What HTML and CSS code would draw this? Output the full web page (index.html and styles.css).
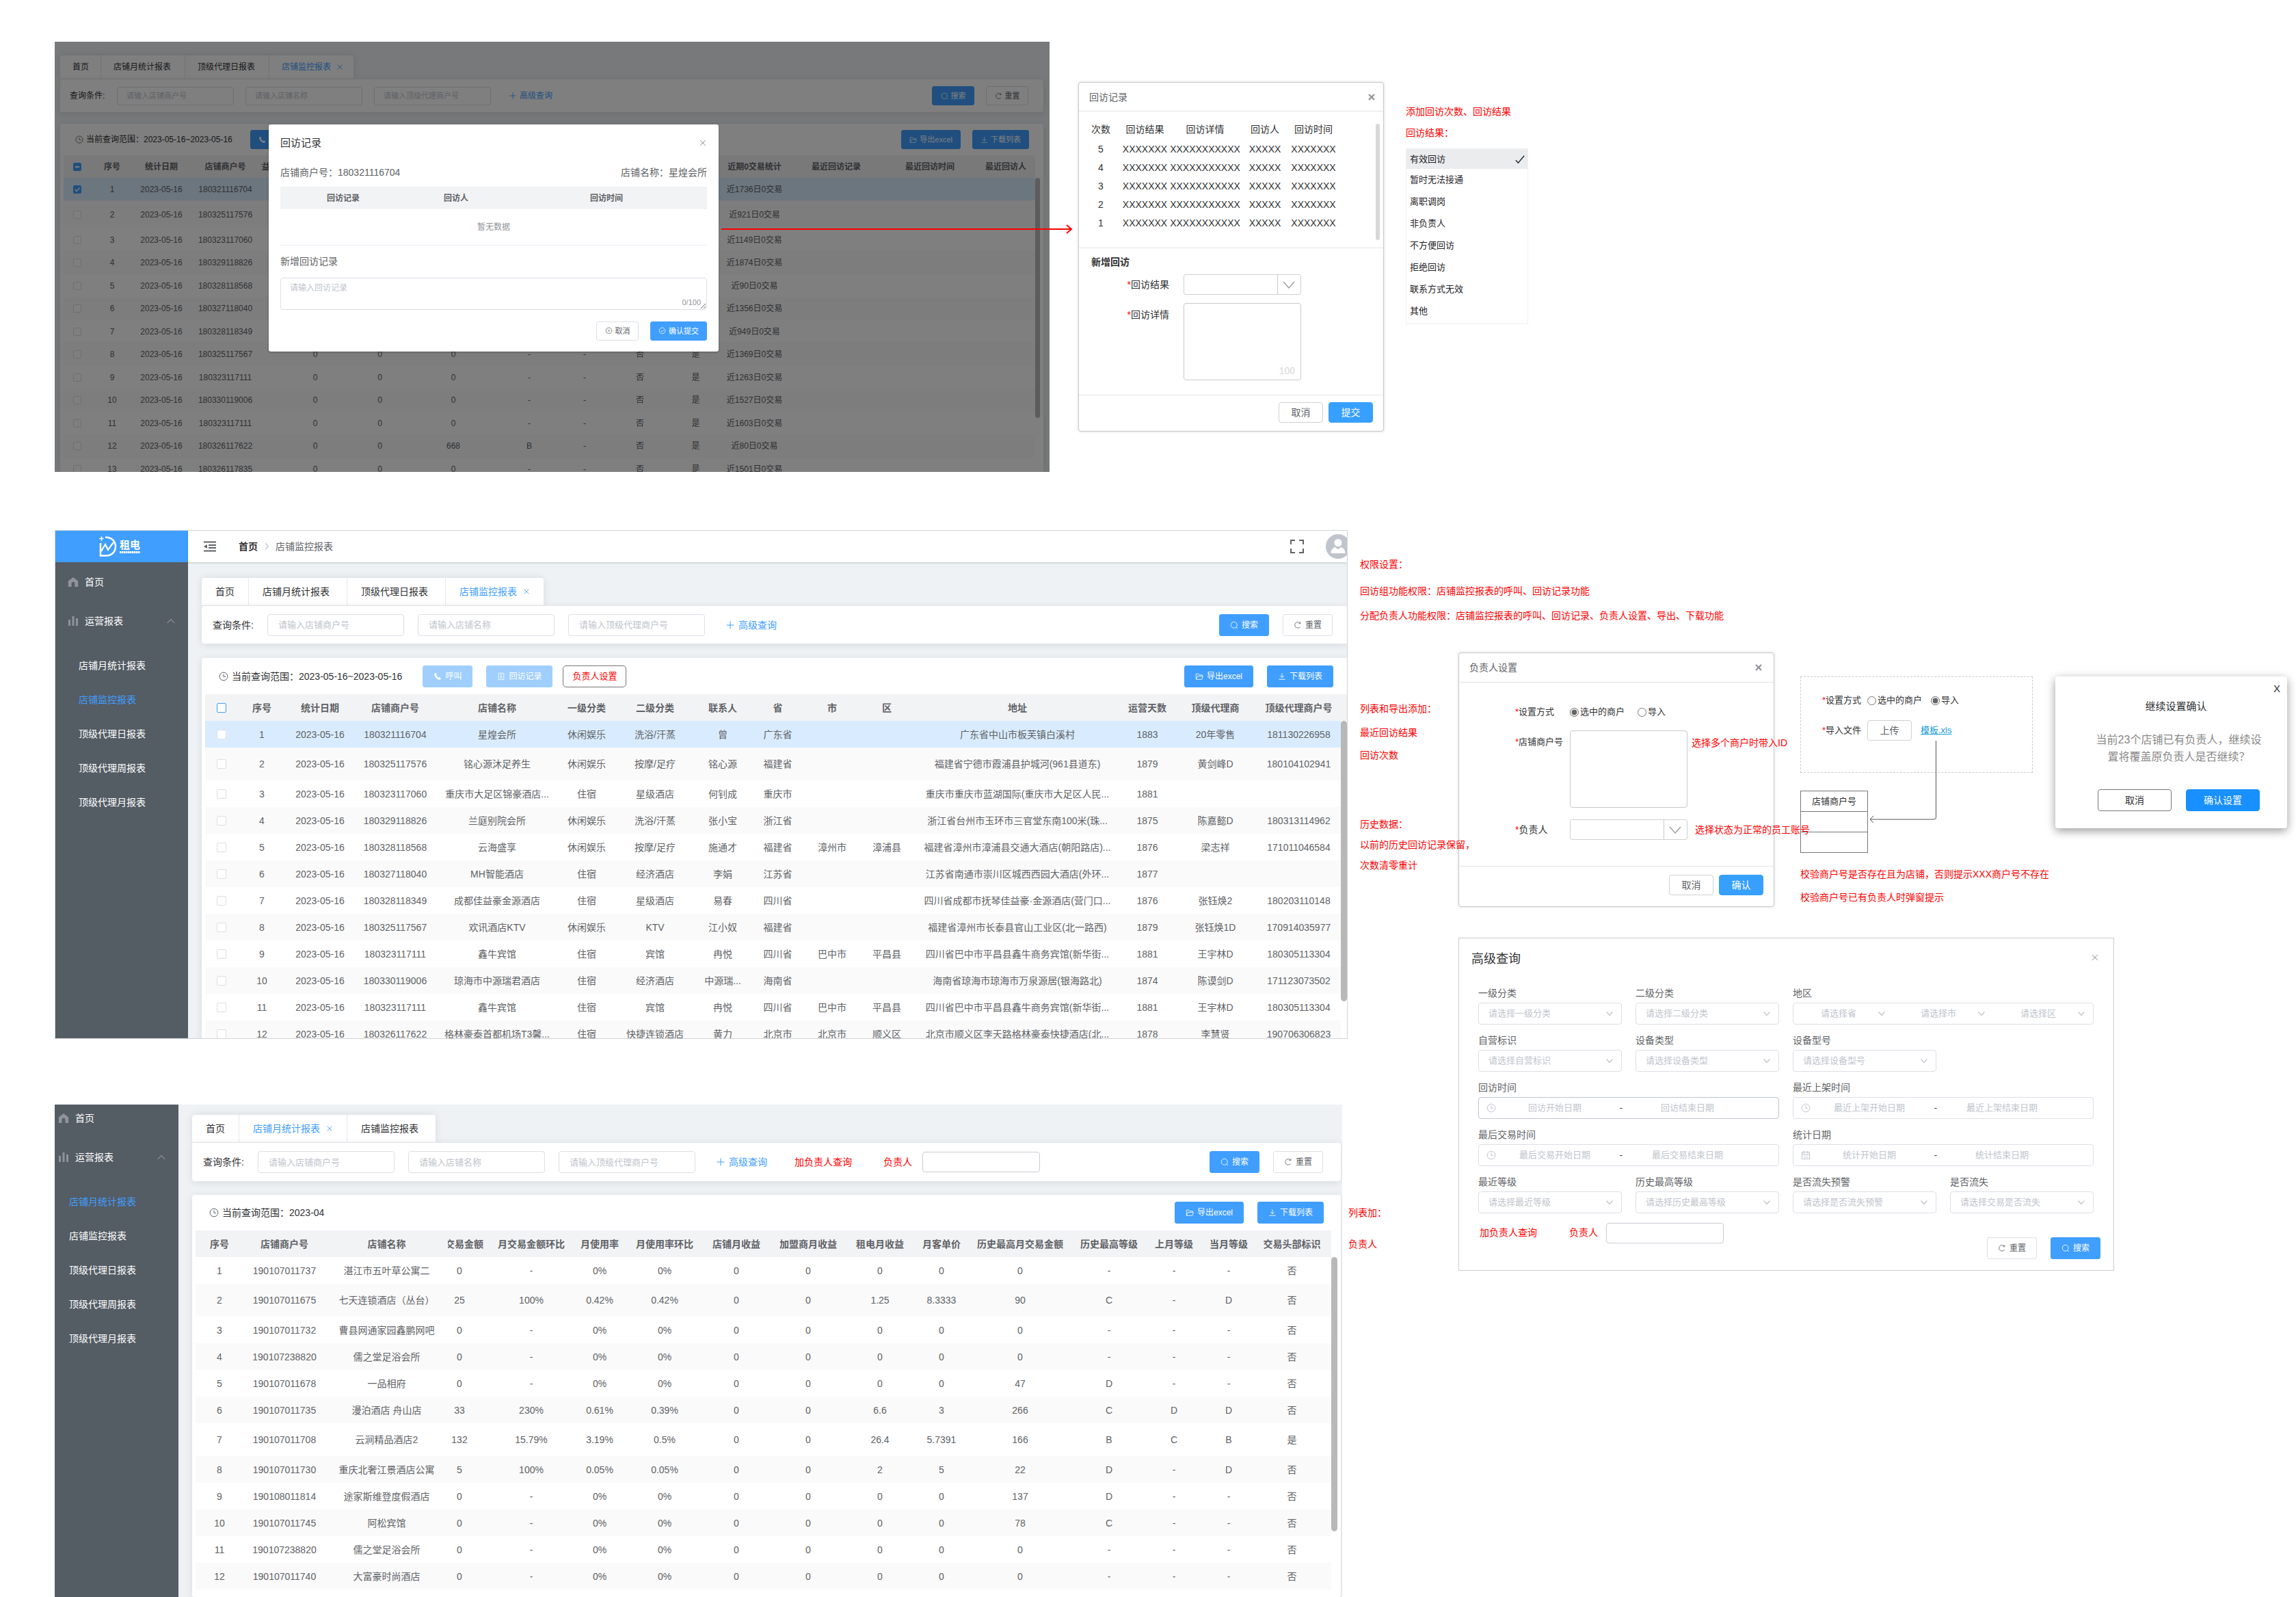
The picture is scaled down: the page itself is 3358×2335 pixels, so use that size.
FILE: index.html
```html
<!DOCTYPE html>
<html lang="zh-CN">
<head>
<meta charset="utf-8">
<title>店铺监控报表</title>
<link rel="stylesheet" href="styles.css">
</head>
<body>
<svg class="sprite" aria-hidden="true">
  <symbol id="i-home" viewBox="0 0 16 16"><path fill="currentColor" d="M8 1 0.8 6.6V15H5.6V10.2a2.4 2.4 0 0 1 4.8 0V15H15.200V6.600Z"/></symbol>
  <symbol id="i-bars" viewBox="0 0 16 16"><path fill="currentColor" d="M1 6h3v9H1zM6.500 1h3v14h-3zM12 4h3v11h-3z"/></symbol>
  <symbol id="i-up" viewBox="0 0 12 12"><path fill="none" stroke="currentColor" d="M1.500 8.500 6 4l4.500 4.500"/></symbol>
  <symbol id="i-right" viewBox="0 0 12 12"><path fill="none" stroke="currentColor" stroke-width="1.200" d="M4 1.500 8.500 6 4 10.500"/></symbol>
  <symbol id="i-clock" viewBox="0 0 14 14"><g fill="none" stroke="currentColor"><circle cx="7" cy="7" r="5.900"/><path d="M7 3.500V7.500H10"/></g></symbol>
  <symbol id="i-phone" viewBox="0 0 14 14"><path fill="currentColor" d="M3.600 1 5.800 3.600 4.800 5.400 8.400 9.100 10.300 8.100 13 10.300 11.200 12.800C6.500 12.600 1.400 7.500 1.300 2.800Z"/></symbol>
  <symbol id="i-doc" viewBox="0 0 14 14"><path fill="none" stroke="currentColor" d="M2.500 1.500h9v11h-9zM5 4.500h4M5 7h4M5 9.500h4"/></symbol>
  <symbol id="i-folder" viewBox="0 0 14 14"><path fill="none" stroke="currentColor" d="M1.500 12V2.500H5.500L7 4.500H12V6M1.500 12 4 6.500H13.300L11.500 12Z"/></symbol>
  <symbol id="i-down" viewBox="0 0 14 14"><path fill="none" stroke="currentColor" d="M7 1.500V9M3.500 5.800 7 9.200 10.500 5.800M1.500 12H12.500"/></symbol>
  <symbol id="i-search" viewBox="0 0 14 14"><g fill="none" stroke="currentColor"><circle cx="6.700" cy="6.700" r="5.200"/><path d="M10.300 10.300 12.800 12.800"/></g></symbol>
  <symbol id="i-refresh" viewBox="0 0 14 14"><path fill="none" stroke="currentColor" d="M11.300 9.500A5 5 0 1 1 10.800 3.600M11.500 1.500V4.400H8.600"/></symbol>
  <symbol id="i-close" viewBox="0 0 12 12"><path fill="none" stroke="currentColor" d="M2 2 10 10M10 2 2 10"/></symbol>
  <symbol id="i-closebold" viewBox="0 0 12 12"><path fill="none" stroke="currentColor" stroke-width="2.200" d="M2 2 10 10M10 2 2 10"/></symbol>
  <symbol id="i-circlex" viewBox="0 0 14 14"><g fill="none" stroke="currentColor"><circle cx="7" cy="7" r="5.500"/><path d="M5.200 5.200 8.800 8.800M8.800 5.200 5.200 8.800"/></g></symbol>
  <symbol id="i-circleok" viewBox="0 0 14 14"><g fill="none" stroke="currentColor"><circle cx="7" cy="7" r="5.500"/><path d="M4.300 7.200 6.400 9.200 9.800 5.200"/></g></symbol>
  <symbol id="i-calendar" viewBox="0 0 14 14"><path fill="none" stroke="currentColor" d="M1.500 2.500h11v10h-11zM1.500 5.500h11M4.500 1v3M9.500 1v3M4 8h1.500M6.500 8H8M9 8h1.500M4 10.300h1.500M6.500 10.300H8M9 10.300h1.500"/></symbol>
  <symbol id="i-full" viewBox="0 0 20 20"><path fill="none" stroke="currentColor" stroke-width="2" d="M1 7V1H7M13 1H19V7M19 13V19H13M7 19H1V13"/></symbol>
  <symbol id="i-fold" viewBox="0 0 18 16"><path fill="none" stroke="currentColor" stroke-width="2" d="M0 1.500H18M7 6H18M7 10H18M0 14.500H18"/><path fill="currentColor" d="M0 8 5 5V11Z"/></symbol>
  <symbol id="i-tick" viewBox="0 0 16 16"><path fill="none" stroke="currentColor" stroke-width="1.600" d="M1 9.500 5 14 15 2"/></symbol>
  <symbol id="i-avatar" viewBox="0 0 36 36"><circle cx="18" cy="18" r="18" fill="#c0c4cc"/><circle cx="18" cy="12.500" r="5.500" fill="#fff"/><path fill="#fff" d="M7.500 28C7.500 22 12 19 14 19L18 22.500 22 19C24 19 28.500 22 28.500 28Z"/></symbol>
  <symbol id="i-logo" viewBox="0 0 26 30"><g fill="none" stroke="#fff" stroke-width="2.600"><path d="M2 10V28.500H10C19 28.500 24 22 24 15 24 8 19 1.500 9 1.500"/><path stroke-width="2.200" d="M3 22 9 12 13 20 21 9"/><path stroke-width="1.600" d="M0.500 3.500H6.500M3.500 0.500V6.500"/></g></symbol>
</svg>

<main class="canvas">

<!-- 回访记录：现有弹窗 -->
<section class="board board-a compact">
  <div class="content">
    <nav class="tabs">
      <a href="#">首页</a><a href="#">店铺月统计报表</a><a href="#">顶级代理日报表</a><a href="#" class="on">店铺监控报表<svg class="x"><use href="#i-close"/></svg></a>
    </nav>
    <form class="card search">
      <span class="lead">查询条件:</span>
      <input class="box" aria-label="店铺商户号" placeholder="请输入店铺商户号">
      <input class="box" aria-label="店铺名称" placeholder="请输入店铺名称">
      <input class="box" aria-label="顶级代理商户号" placeholder="请输入顶级代理商户号">
      <a href="#" class="more"><svg viewBox="0 0 12 12"><path stroke="currentColor" d="M6 0.500V11.500M0.500 6H11.500"/></svg>高级查询</a>
      <span class="acts"><button type="button" class="btn primary"><svg><use href="#i-search"/></svg>搜索</button><button type="button" class="btn"><svg><use href="#i-refresh"/></svg>重置</button></span>
    </form>
    <div class="card list">
      <div class="bar">
        <span class="range"><svg><use href="#i-clock"/></svg>当前查询范围：2023-05-16~2023-05-16</span>
        <button type="button" class="btn primary first"><svg><use href="#i-phone"/></svg>呼叫</button>
        <span class="acts"><button type="button" class="btn primary"><svg><use href="#i-folder"/></svg>导出excel</button><button type="button" class="btn primary"><svg><use href="#i-down"/></svg>下载列表</button></span>
      </div>
      <div class="grid">
        <table class="data pin4">
          <colgroup><col class="w40"><col class="w62"><col class="w82"><col class="w105"><col class="w27"><col class="w104"><col class="w85"><col class="w130"><col class="w92"><col class="w70"><col class="w92"><col class="w71"><col class="w101"><col><col class="w136"><col class="w86"></colgroup>
          <thead><tr><th><input type="checkbox" class="part" aria-label="全选"><th>序号<th>统计日期<th>店铺商户号<th><div class="cut">收益</div><th><th><th><th><th><th><th><th>近期0交易统计<th>最近回访记录<th>最近回访时间<th>最近回访人</tr></thead>
          <tbody>
          <tr class="sel"><td><input type="checkbox" checked aria-label="选择1"><td>1<td>2023-05-16<td>180321116704<td colspan="8"><td>近1736日0交易<td><td><td>
          <tr class="tall"><td><input type="checkbox" aria-label="选择2"><td>2<td>2023-05-16<td>180325117576<td colspan="8"><td>近921日0交易<td><td><td>
          <tr><td><input type="checkbox" aria-label="选择3"><td>3<td>2023-05-16<td>180323117060<td colspan="8"><td>近1149日0交易<td><td><td>
          <tr><td><input type="checkbox" aria-label="选择4"><td>4<td>2023-05-16<td>180329118826<td colspan="8"><td>近1874日0交易<td><td><td>
          <tr><td><input type="checkbox" aria-label="选择5"><td>5<td>2023-05-16<td>180328118568<td colspan="8"><td>近90日0交易<td><td><td>
          <tr><td><input type="checkbox" aria-label="选择6"><td>6<td>2023-05-16<td>180327118040<td colspan="8"><td>近1356日0交易<td><td><td>
          <tr><td><input type="checkbox" aria-label="选择7"><td>7<td>2023-05-16<td>180328118349<td colspan="8"><td>近949日0交易<td><td><td>
          <tr><td><input type="checkbox" aria-label="选择8"><td>8<td>2023-05-16<td>180325117567<td><td>0<td>0<td>0<td>-<td>-<td>否<td>是<td>近1369日0交易<td><td><td>
          <tr><td><input type="checkbox" aria-label="选择9"><td>9<td>2023-05-16<td>180323117111<td><td>0<td>0<td>0<td>-<td>-<td>否<td>是<td>近1263日0交易<td><td><td>
          <tr><td><input type="checkbox" aria-label="选择10"><td>10<td>2023-05-16<td>180330119006<td><td>0<td>0<td>0<td>-<td>-<td>否<td>是<td>近1527日0交易<td><td><td>
          <tr><td><input type="checkbox" aria-label="选择11"><td>11<td>2023-05-16<td>180323117111<td><td>0<td>0<td>0<td>-<td>-<td>否<td>是<td>近1603日0交易<td><td><td>
          <tr><td><input type="checkbox" aria-label="选择12"><td>12<td>2023-05-16<td>180326117622<td><td>0<td>0<td>668<td>B<td>-<td>否<td>是<td>近80日0交易<td><td><td>
          <tr><td><input type="checkbox" aria-label="选择13"><td>13<td>2023-05-16<td>180326117835<td><td>0<td>0<td>0<td>-<td>-<td>否<td>是<td>近1501日0交易<td><td><td>
          </tbody>
        </table>
        <div class="rail"><i></i></div>
      </div>
    </div>
  </div>
  <div class="mask"></div>
  <form class="modal">
    <header><h2>回访记录</h2><button type="button" class="icon" aria-label="关闭"><svg><use href="#i-close"/></svg></button></header>
    <p class="who"><span>店铺商户号：180321116704</span><span>店铺名称：星煌会所</span></p>
    <table class="visits">
      <colgroup><col class="w184"><col class="w146"><col></colgroup>
      <thead><tr><th>回访记录<th>回访人<th>回访时间</tr></thead>
      <tbody><tr><td colspan="3">暂无数据</tr></tbody>
    </table>
    <label for="visit-note">新增回访记录</label>
    <div class="counted"><textarea id="visit-note" class="box" placeholder="请输入回访记录"></textarea><span>0/100</span></div>
    <footer><button type="button" class="btn"><svg><use href="#i-circlex"/></svg>取消</button><button type="button" class="btn primary"><svg><use href="#i-circleok"/></svg>确认提交</button></footer>
  </form>
</section>

<!-- 回访记录：新弹窗 -->
<form class="dialog dialog-b">
  <header><h2>回访记录</h2><button type="button" class="icon" aria-label="关闭"><svg><use href="#i-closebold"/></svg></button></header>
  <div class="history">
    <table>
      <colgroup><col class="w60"><col class="w69"><col class="w107"><col class="w68"><col class="w74"></colgroup>
      <thead><tr><th>次数<th>回访结果<th>回访详情<th>回访人<th>回访时间</tr></thead>
      <tbody>
      <tr><td>5<td>XXXXXXX<td>XXXXXXXXXXX<td>XXXXX<td>XXXXXXX
      <tr><td>4<td>XXXXXXX<td>XXXXXXXXXXX<td>XXXXX<td>XXXXXXX
      <tr><td>3<td>XXXXXXX<td>XXXXXXXXXXX<td>XXXXX<td>XXXXXXX
      <tr><td>2<td>XXXXXXX<td>XXXXXXXXXXX<td>XXXXX<td>XXXXXXX
      <tr><td>1<td>XXXXXXX<td>XXXXXXXXXXX<td>XXXXX<td>XXXXXXX
      </tbody>
    </table>
    <i></i>
  </div>
  <div class="fresh">
    <h3>新增回访</h3>
    <div class="fields">
      <label for="b-result"><em>*</em>回访结果</label>
      <select id="b-result" class="split"><option></option></select>
      <label for="b-detail" class="toplabel"><em>*</em>回访详情</label>
      <div class="counted"><textarea id="b-detail"></textarea><span>100</span></div>
    </div>
  </div>
  <footer><button type="button">取消</button><button type="button" class="go">提交</button></footer>
</form>

<ul class="options">
  <li class="on">有效回访<svg><use href="#i-tick"/></svg></li><li>暂时无法接通</li><li>离职调岗</li><li>非负责人</li><li>不方便回访</li><li>拒绝回访</li><li>联系方式无效</li><li>其他</li>
</ul>

<!-- 店铺监控报表 -->
<section class="board board-c">
  <aside>
    <div class="brand"><svg><use href="#i-logo"/></svg><span>租电<i></i></span></div>
    <nav>
      <a href="#" class="top"><svg><use href="#i-home"/></svg>首页</a>
      <a href="#" class="top"><svg><use href="#i-bars"/></svg>运营报表<svg class="fold"><use href="#i-up"/></svg></a>
      <a href="#" class="sub">店铺月统计报表</a><a href="#" class="sub on">店铺监控报表</a><a href="#" class="sub">顶级代理日报表</a><a href="#" class="sub">顶级代理周报表</a><a href="#" class="sub">顶级代理月报表</a>
    </nav>
  </aside>
  <div class="page">
    <header class="crumbs"><svg class="hamb"><use href="#i-fold"/></svg><b>首页</b><svg class="sep"><use href="#i-right"/></svg><span>店铺监控报表</span><svg class="full"><use href="#i-full"/></svg><svg class="face"><use href="#i-avatar"/></svg></header>
    <div class="content">
      <nav class="tabs">
        <a href="#">首页</a><a href="#">店铺月统计报表</a><a href="#">顶级代理日报表</a><a href="#" class="on">店铺监控报表<svg class="x"><use href="#i-close"/></svg></a>
      </nav>
      <form class="card search">
        <span class="lead">查询条件:</span>
        <input class="box" aria-label="店铺商户号" placeholder="请输入店铺商户号">
        <input class="box" aria-label="店铺名称" placeholder="请输入店铺名称">
        <input class="box" aria-label="顶级代理商户号" placeholder="请输入顶级代理商户号">
        <a href="#" class="more"><svg viewBox="0 0 12 12"><path stroke="currentColor" d="M6 0.500V11.500M0.500 6H11.500"/></svg>高级查询</a>
        <span class="acts"><button type="button" class="btn primary"><svg><use href="#i-search"/></svg>搜索</button><button type="button" class="btn"><svg><use href="#i-refresh"/></svg>重置</button></span>
      </form>
      <div class="card list">
        <div class="bar">
          <span class="range"><svg><use href="#i-clock"/></svg>当前查询范围：2023-05-16~2023-05-16</span>
          <button type="button" class="btn soft first"><svg><use href="#i-phone"/></svg>呼叫</button><button type="button" class="btn soft wide"><svg><use href="#i-doc"/></svg>回访记录</button><button type="button" class="btn owner">负责人设置</button>
          <span class="acts"><button type="button" class="btn primary"><svg><use href="#i-folder"/></svg>导出excel</button><button type="button" class="btn primary"><svg><use href="#i-down"/></svg>下载列表</button></span>
        </div>
        <div class="grid">
          <table class="data">
            <colgroup><col class="w48"><col class="w70"><col class="w100"><col class="w120"><col class="w178"><col class="w84"><col class="w116"><col class="w82"><col class="w79"><col class="w80"><col class="w80"><col><col class="w78"><col class="w121"><col class="w123"></colgroup>
            <thead><tr><th><input type="checkbox" class="hot" aria-label="全选"><th>序号<th>统计日期<th>店铺商户号<th>店铺名称<th>一级分类<th>二级分类<th>联系人<th>省<th>市<th>区<th>地址<th>运营天数<th>顶级代理商<th>顶级代理商户号</tr></thead>
            <tbody>
            <tr class="sel"><td><input type="checkbox" aria-label="选择1"><td>1<td>2023-05-16<td>180321116704<td>星煌会所<td>休闲娱乐<td>洗浴/汗蒸<td>曾<td>广东省<td><td><td>广东省中山市板芙镇白溪村<td>1883<td>20年零售<td>181130226958
            <tr class="tall"><td><input type="checkbox" aria-label="选择2"><td>2<td>2023-05-16<td>180325117576<td>铭心源沐足养生<td>休闲娱乐<td>按摩/足疗<td>铭心源<td>福建省<td><td><td>福建省宁德市霞浦县护城河(961县道东)<td>1879<td>黄剑峰D<td>180104102941
            <tr><td><input type="checkbox" aria-label="选择3"><td>3<td>2023-05-16<td>180323117060<td>重庆市大足区锦豪酒店...<td>住宿<td>星级酒店<td>何钊成<td>重庆市<td><td><td>重庆市重庆市蓝湖国际(重庆市大足区人民...<td>1881<td><td>
            <tr><td><input type="checkbox" aria-label="选择4"><td>4<td>2023-05-16<td>180329118826<td>兰庭别院会所<td>休闲娱乐<td>洗浴/汗蒸<td>张小宝<td>浙江省<td><td><td>浙江省台州市玉环市三官堂东南100米(珠...<td>1875<td>陈嘉懿D<td>180313114962
            <tr><td><input type="checkbox" aria-label="选择5"><td>5<td>2023-05-16<td>180328118568<td>云海盛享<td>休闲娱乐<td>按摩/足疗<td>施通才<td>福建省<td>漳州市<td>漳浦县<td>福建省漳州市漳浦县交通大酒店(朝阳路店)...<td>1876<td>梁志祥<td>171011046584
            <tr><td><input type="checkbox" aria-label="选择6"><td>6<td>2023-05-16<td>180327118040<td>MH智能酒店<td>住宿<td>经济酒店<td>李娟<td>江苏省<td><td><td>江苏省南通市崇川区城西西园大酒店(外环...<td>1877<td><td>
            <tr><td><input type="checkbox" aria-label="选择7"><td>7<td>2023-05-16<td>180328118349<td>成都佳益豪金源酒店<td>住宿<td>星级酒店<td>易春<td>四川省<td><td><td>四川省成都市抚琴佳益豪·金源酒店(营门口...<td>1876<td>张钰焕2<td>180203110148
            <tr><td><input type="checkbox" aria-label="选择8"><td>8<td>2023-05-16<td>180325117567<td>欢讯酒店KTV<td>休闲娱乐<td>KTV<td>江小奴<td>福建省<td><td><td>福建省漳州市长泰县官山工业区(北一路西)<td>1879<td>张钰焕1D<td>170914035977
            <tr><td><input type="checkbox" aria-label="选择9"><td>9<td>2023-05-16<td>180323117111<td>鑫牛宾馆<td>住宿<td>宾馆<td>冉悦<td>四川省<td>巴中市<td>平昌县<td>四川省巴中市平昌县鑫牛商务宾馆(新华街...<td>1881<td>王宇林D<td>180305113304
            <tr><td><input type="checkbox" aria-label="选择10"><td>10<td>2023-05-16<td>180330119006<td>琼海市中源瑞君酒店<td>住宿<td>经济酒店<td>中源瑞...<td>海南省<td><td><td>海南省琼海市琼海市万泉源居(银海路北)<td>1874<td>陈谟剑D<td>171123073502
            <tr><td><input type="checkbox" aria-label="选择11"><td>11<td>2023-05-16<td>180323117111<td>鑫牛宾馆<td>住宿<td>宾馆<td>冉悦<td>四川省<td>巴中市<td>平昌县<td>四川省巴中市平昌县鑫牛商务宾馆(新华街...<td>1881<td>王宇林D<td>180305113304
            <tr><td><input type="checkbox" aria-label="选择12"><td>12<td>2023-05-16<td>180326117622<td>格林豪泰首都机场T3馨...<td>住宿<td>快捷连锁酒店<td>黄力<td>北京市<td>北京市<td>顺义区<td>北京市顺义区李天路格林豪泰快捷酒店(北...<td>1878<td>李慧贤<td>190706306823
            </tbody>
          </table>
          <div class="rail headed"><i></i></div>
        </div>
      </div>
    </div>
  </div>
</section>

<!-- 负责人设置 -->
<form class="dialog dialog-d">
  <header><h2>负责人设置</h2><button type="button" class="icon" aria-label="关闭"><svg><use href="#i-closebold"/></svg></button></header>
  <div class="fields">
    <span class="small"><em>*</em>设置方式</span>
    <div class="radios"><label><input type="radio" name="mode-d" checked>选中的商户</label><label><input type="radio" name="mode-d">导入</label></div>
    <label for="d-ids" class="small toplabel"><em>*</em>店铺商户号</label>
    <textarea id="d-ids"></textarea>
    <label for="d-owner"><em>*</em>负责人</label>
    <select id="d-owner" class="split"><option></option></select>
  </div>
  <footer><button type="button">取消</button><button type="button" class="go">确认</button></footer>
</form>

<form class="import">
  <div><span><em>*</em>设置方式</span><label><input type="radio" name="mode-i">选中的商户</label><label><input type="radio" name="mode-i" checked>导入</label></div>
  <div><span><em>*</em>导入文件</span><button type="button">上传</button><a href="#">模板.xls</a></div>
</form>

<table class="sheet"><thead><tr><th>店铺商户号</tr></thead><tbody><tr><td></tr><tr><td></tr></tbody></table>

<section class="confirm">
  <button type="button" class="shut">X</button>
  <h2>继续设置确认</h2>
  <p>当前23个店铺已有负责人，继续设<br>置将覆盖原负责人是否继续？</p>
  <footer><button type="button">取消</button><button type="button" class="go">确认设置</button></footer>
</section>

<!-- 高级查询 -->
<form class="advanced">
  <header><h2>高级查询</h2><button type="button" class="icon" aria-label="关闭"><svg><use href="#i-close"/></svg></button></header>
  <div class="filters">
    <label>一级分类<select><option>请选择一级分类</option></select></label>
    <label>二级分类<select><option>请选择二级分类</option></select></label>
    <div class="item two"><span>地区</span><div class="joined region"><select aria-label="省"><option>请选择省</option></select><select aria-label="市"><option>请选择市</option></select><select aria-label="区"><option>请选择区</option></select></div></div>
    <label>自营标识<select><option>请选择自营标识</option></select></label>
    <label>设备类型<select><option>请选择设备类型</option></select></label>
    <label>设备型号<select><option>请选择设备型号</option></select></label>
    <div class="item two newline"><span>回访时间</span><div class="joined dates hover"><svg><use href="#i-clock"/></svg><input aria-label="回访开始日期" placeholder="回访开始日期"><b>-</b><input aria-label="回访结束日期" placeholder="回访结束日期"></div></div>
    <div class="item two"><span>最近上架时间</span><div class="joined dates"><svg><use href="#i-clock"/></svg><input aria-label="最近上架开始日期" placeholder="最近上架开始日期"><b>-</b><input aria-label="最近上架结束日期" placeholder="最近上架结束日期"></div></div>
    <div class="item two"><span>最后交易时间</span><div class="joined dates"><svg><use href="#i-clock"/></svg><input aria-label="最后交易开始日期" placeholder="最后交易开始日期"><b>-</b><input aria-label="最后交易结束日期" placeholder="最后交易结束日期"></div></div>
    <div class="item two"><span>统计日期</span><div class="joined dates"><svg><use href="#i-calendar"/></svg><input aria-label="统计开始日期" placeholder="统计开始日期"><b>-</b><input aria-label="统计结束日期" placeholder="统计结束日期"></div></div>
    <label>最近等级<select><option>请选择最近等级</option></select></label>
    <label>历史最高等级<select><option>请选择历史最高等级</option></select></label>
    <label>是否流失预警<select><option>请选择是否流失预警</option></select></label>
    <label>是否流失<select><option>请选择交易是否流失</option></select></label>
  </div>
  <footer><span class="red">加负责人查询</span><label class="red" for="f-owner">负责人</label><input id="f-owner" class="plain"><span class="acts"><button type="button" class="btn"><svg><use href="#i-refresh"/></svg>重置</button><button type="button" class="btn primary"><svg><use href="#i-search"/></svg>搜索</button></span></footer>
</form>

<!-- 店铺月统计报表 -->
<section class="board board-g">
  <aside>
    <nav>
      <a href="#" class="top"><svg><use href="#i-home"/></svg>首页</a>
      <a href="#" class="top"><svg><use href="#i-bars"/></svg>运营报表<svg class="fold"><use href="#i-up"/></svg></a>
      <a href="#" class="sub on">店铺月统计报表</a><a href="#" class="sub">店铺监控报表</a><a href="#" class="sub">顶级代理日报表</a><a href="#" class="sub">顶级代理周报表</a><a href="#" class="sub">顶级代理月报表</a>
    </nav>
  </aside>
  <div class="page">
    <div class="content">
      <nav class="tabs">
        <a href="#">首页</a><a href="#" class="on">店铺月统计报表<svg class="x"><use href="#i-close"/></svg></a><a href="#">店铺监控报表</a>
      </nav>
      <form class="card search">
        <span class="lead">查询条件:</span>
        <input class="box" aria-label="店铺商户号" placeholder="请输入店铺商户号">
        <input class="box" aria-label="店铺名称" placeholder="请输入店铺名称">
        <input class="box" aria-label="顶级代理商户号" placeholder="请输入顶级代理商户号">
        <a href="#" class="more"><svg viewBox="0 0 12 12"><path stroke="currentColor" d="M6 0.500V11.500M0.500 6H11.500"/></svg>高级查询</a>
        <span class="red add">加负责人查询</span><label class="red owner-label" for="g-owner">负责人</label><input id="g-owner" class="plain">
        <span class="acts"><button type="button" class="btn primary"><svg><use href="#i-search"/></svg>搜索</button><button type="button" class="btn"><svg><use href="#i-refresh"/></svg>重置</button></span>
      </form>
      <div class="card list">
        <div class="bar">
          <span class="range"><svg><use href="#i-clock"/></svg>当前查询范围：2023-04</span>
          <span class="acts"><button type="button" class="btn primary"><svg><use href="#i-folder"/></svg>导出excel</button><button type="button" class="btn primary"><svg><use href="#i-down"/></svg>下载列表</button></span>
        </div>
        <div class="grid">
          <table class="data pin3">
            <colgroup><col class="w70"><col class="w120"><col class="w179"><col class="w67"><col class="w110"><col class="w90"><col class="w100"><col class="w110"><col class="w100"><col class="w110"><col class="w70"><col><col class="w100"><col class="w90"><col class="w70"><col class="w115"></colgroup>
            <thead><tr><th>序号<th>店铺商户号<th>店铺名称<th><div class="cut">交易金额</div><th>月交易金额环比<th>月使用率<th>月使用率环比<th>店铺月收益<th>加盟商月收益<th>租电月收益<th>月客单价<th>历史最高月交易金额<th>历史最高等级<th>上月等级<th>当月等级<th>交易头部标识</tr></thead>
            <tbody>
            <tr><td>1<td>190107011737<td>湛江市五叶草公寓二<td>0<td>-<td>0%<td>0%<td>0<td>0<td>0<td>0<td>0<td>-<td>-<td>-<td>否
            <tr class="tall"><td>2<td>190107011675<td>七天连锁酒店（丛台）<td>25<td>100%<td>0.42%<td>0.42%<td>0<td>0<td>1.25<td>8.3333<td>90<td>C<td>-<td>D<td>否
            <tr><td>3<td>190107011732<td>曹县网通家园鑫鹏网吧<td>0<td>-<td>0%<td>0%<td>0<td>0<td>0<td>0<td>0<td>-<td>-<td>-<td>否
            <tr><td>4<td>190107238820<td>儒之堂足浴会所<td>0<td>-<td>0%<td>0%<td>0<td>0<td>0<td>0<td>0<td>-<td>-<td>-<td>否
            <tr><td>5<td>190107011678<td>一品相府<td>0<td>-<td>0%<td>0%<td>0<td>0<td>0<td>0<td>47<td>D<td>-<td>-<td>否
            <tr><td>6<td>190107011735<td>漫泊酒店 舟山店<td>33<td>230%<td>0.61%<td>0.39%<td>0<td>0<td>6.6<td>3<td>266<td>C<td>D<td>D<td>否
            <tr class="tall"><td>7<td>190107011708<td>云涧精品酒店2<td>132<td>15.79%<td>3.19%<td>0.5%<td>0<td>0<td>26.4<td>5.7391<td>166<td>B<td>C<td>B<td>是
            <tr><td>8<td>190107011730<td>重庆北奢江景酒店公寓<td>5<td>100%<td>0.05%<td>0.05%<td>0<td>0<td>2<td>5<td>22<td>D<td>-<td>D<td>否
            <tr><td>9<td>190108011814<td>途家斯维登度假酒店<td>0<td>-<td>0%<td>0%<td>0<td>0<td>0<td>0<td>137<td>D<td>-<td>-<td>否
            <tr><td>10<td>190107011745<td>阿松宾馆<td>0<td>-<td>0%<td>0%<td>0<td>0<td>0<td>0<td>78<td>C<td>-<td>-<td>否
            <tr><td>11<td>190107238820<td>儒之堂足浴会所<td>0<td>-<td>0%<td>0%<td>0<td>0<td>0<td>0<td>0<td>-<td>-<td>-<td>否
            <tr><td>12<td>190107011740<td>大富豪时尚酒店<td>0<td>-<td>0%<td>0%<td>0<td>0<td>0<td>0<td>0<td>-<td>-<td>-<td>否
            </tbody>
          </table>
          <div class="rail"><i></i></div>
        </div>
      </div>
    </div>
  </div>
</section>

<!-- 连接线 -->
<svg class="link link-red" viewBox="0 0 514 16"><path fill="none" stroke="#f00" stroke-width="2" d="M0 8H512M505 2 512 8 505 14"/></svg>
<svg class="link link-grey" viewBox="0 0 100 124"><path fill="none" stroke="#555" d="M97.500 0V112a3 3 0 0 1-3 3H1M6 110 1 115 6 120"/></svg>

<!-- 批注 -->
<p class="note n1">添加回访次数、回访结果</p>
<p class="note n2">回访结果：</p>
<p class="note n3">权限设置：</p>
<p class="note n4">回访组功能权限：店铺监控报表的呼叫、回访记录功能</p>
<p class="note n5">分配负责人功能权限：店铺监控报表的呼叫、回访记录、负责人设置、导出、下载功能</p>
<p class="note n6">列表和导出添加：</p>
<p class="note n7">最近回访结果</p>
<p class="note n8">回访次数</p>
<p class="note n9">历史数据：<br>以前的历史回访记录保留，<br>次数清零重计</p>
<p class="note n10">选择多个商户时带入ID</p>
<p class="note n11">选择状态为正常的员工账号</p>
<p class="note n12">校验商户号是否存在且为店铺，否则提示XXX商户号不存在</p>
<p class="note n13">校验商户号已有负责人时弹窗提示</p>
<p class="note n14">列表加：</p>
<p class="note n15">负责人</p>
</main>
</body>
</html>
```
FILE: styles.css
```css
* { box-sizing: border-box; }
body {
  margin: 0;
  background: #fff;
  color: #303133;
  font: 14px/20px "Liberation Sans", "Noto Sans CJK SC", sans-serif;
}
button, input, select, textarea { font: inherit; color: inherit; margin: 0; }
button { cursor: pointer; }
textarea { display: block; resize: none; }
h2, h3, p, ul { margin: 0; padding: 0; font-size: 14px; font-weight: 400; }
em { color: #f00; font-style: normal; }
a { color: inherit; text-decoration: none; }
table { border-collapse: collapse; table-layout: fixed; }
th, td { padding: 0; text-align: center; white-space: nowrap; }
.sprite { display: none; }
.canvas { position: relative; min-height: 100vh; overflow: hidden; }

/* column widths */
.w27 { width: 27px; } .w40 { width: 40px; } .w48 { width: 48px; } .w60 { width: 60px; }
.w62 { width: 62px; } .w67 { width: 67px; } .w68 { width: 68px; } .w69 { width: 69px; }
.w70 { width: 70px; } .w71 { width: 71px; } .w74 { width: 74px; } .w78 { width: 78px; }
.w79 { width: 79px; } .w80 { width: 80px; } .w82 { width: 82px; } .w84 { width: 84px; }
.w85 { width: 85px; } .w86 { width: 86px; } .w90 { width: 90px; } .w92 { width: 92px; }
.w100 { width: 100px; } .w101 { width: 101px; } .w104 { width: 104px; } .w105 { width: 105px; }
.w107 { width: 107px; } .w110 { width: 110px; } .w115 { width: 115px; } .w116 { width: 116px; }
.w120 { width: 120px; } .w121 { width: 121px; } .w123 { width: 123px; } .w130 { width: 130px; }
.w136 { width: 136px; } .w146 { width: 146px; } .w178 { width: 178px; } .w179 { width: 179px; }
.w184 { width: 184px; }

/* items placed on the canvas */
.board, .dialog, .options, .import, .sheet, .confirm, .advanced, .link, .note { position: absolute; }
.board { display: flex; overflow: hidden; background: #eef2f4; }
.board-a { left: 80px; top: 61px; width: 1455px; height: 629px; }
.board-c { left: 80px; top: 775px; width: 1891px; height: 744px; border: 1px solid #d0d3d6; }
.board-g { left: 80px; top: 1615px; width: 1883px; bottom: 0; }
.dialog-b { left: 1577px; top: 120px; width: 447px; }
.dialog-d { left: 2133px; top: 954px; width: 462px; }
.options { left: 2056px; top: 217px; width: 179px; }
.import { left: 2633px; top: 989px; width: 340px; height: 141px; }
.sheet { left: 2633px; top: 1156px; width: 99px; }
.confirm { left: 3006px; top: 989px; width: 339px; height: 222px; }
.advanced { left: 2133px; top: 1371px; width: 959px; }
.link-red { left: 1055px; top: 327px; width: 514px; height: 16px; }
.link-grey { left: 2734px; top: 1083px; width: 100px; height: 124px; }

/* side menu */
aside { flex: none; width: 194px; background: #545c64; color: #fff; }
.board-g aside { width: 181px; }
.brand { display: flex; align-items: center; justify-content: center; gap: 4px; height: 46px; padding-right: 6px; background: #409eff; }
.brand svg { width: 26px; height: 30px; }
.brand span { font-size: 15px; line-height: 16px; font-weight: 700; }
.brand i { display: block; height: 3px; margin-top: 1px; background: repeating-linear-gradient(90deg, #fff 0 2px, #a0cfff 2px 3px); }
aside nav { padding-bottom: 12px; }
aside a { display: flex; align-items: center; height: 50px; padding-left: 34px; }
aside a.top { height: 57px; padding-left: 18px; padding-right: 18px; gap: 9px; }
aside a.top svg { width: 16px; height: 16px; color: #909399; }
aside a.top .fold { width: 14px; height: 14px; margin-left: auto; }
aside a.top + .sub { margin-top: 12px; }
aside a.on { color: #409eff; }
.board-g aside nav { margin-top: -9px; }
.board-g aside a { padding-left: 21px; }
.board-g aside a.top { padding-left: 5px; }

/* report page */
.page { flex: 1; min-width: 0; display: flex; flex-direction: column; }
.crumbs { position: relative; z-index: 1; flex: none; display: flex; align-items: center; height: 46px; padding-left: 23px; background: #fff; color: #606266; box-shadow: 0 1px 3px rgba(0, 21, 41, .2); }
.crumbs b { color: #303133; margin-left: 33px; }
.hamb { width: 18px; height: 16px; }
.sep { width: 12px; height: 12px; margin: 0 7px; color: #c0c4cc; }
.full { width: 20px; height: 20px; margin-left: auto; }
.face { width: 36px; height: 36px; margin: 0 -5px 0 32px; }
.content { flex: 1; min-width: 0; display: flex; flex-direction: column; padding: 23px 0 0 20px; }
.board-g .content { padding: 15px 2px 0 20px; }
.compact .content { padding: 20px 9px 0 8px; }
.tabs { flex: none; align-self: flex-start; display: flex; height: 41px; border-radius: 4px 4px 0 0; background: #fff; border-bottom: 1px solid #e4e7ed; box-shadow: 0 0 12px rgba(0, 0, 0, .1); }
.tabs a { display: flex; align-items: center; justify-content: space-between; padding: 0 20px; white-space: nowrap; }
.tabs a + a { border-left: 1px solid #e4e7ed; }
.tabs a:not(.on) { padding-right: 25px; }
.tabs a:first-child { padding-right: 20px; }
.tabs a.on { color: #409eff; gap: 9px; }
.tabs .x { width: 10px; height: 10px; }
.card { background: #fff; border-radius: 4px; box-shadow: 0 2px 12px rgba(0, 0, 0, .1); }
.board-c .card { border-radius: 4px 0 0 4px; }
.search { position: relative; flex: none; display: flex; align-items: center; height: 55px; padding: 0 21px 0 16px; margin-bottom: 21px; border-top-left-radius: 0; }
.board-g .search { height: 56px; padding-right: 26px; margin-bottom: 20px; }
.lead { width: 80px; }
.box { width: 200px; height: 32px; padding: 0 15px; border: 1px solid #dcdfe6; border-radius: 4px; background: #fff; font-size: 13px; }
.box + .box { margin-left: 20px; }
::placeholder { color: #c0c4cc; opacity: 1; }
.more { display: flex; align-items: center; gap: 6px; margin-left: 31px; color: #409eff; }
.more svg { width: 12px; height: 12px; }
.acts { display: flex; gap: 20px; margin-left: auto; }
.btn { display: flex; align-items: center; justify-content: center; gap: 5px; height: 32px; min-width: 73px; padding: 0 15px; border: 1px solid #dcdfe6; border-radius: 3px; background: #fff; color: #606266; font-size: 12px; line-height: 16px; white-space: nowrap; }
.btn svg { flex: none; width: 12px; height: 12px; }
.btn.primary { background: #409eff; border-color: #409eff; color: #fff; }
.btn.soft { background: #a0cfff; border-color: #a0cfff; color: #fff; }
.btn.first { margin-left: 30px; }
.btn.wide { margin-left: 20px; }
.btn.owner { margin-left: 15px; padding: 0 13px; border-color: #777; border-radius: 5px; color: #f00; font-size: 13px; }
.red { color: #f00; }
.add { margin-left: 40px; }
.owner-label { margin-left: 46px; margin-right: 15px; }
.plain { width: 172px; height: 30px; padding: 0 8px; border: 1px solid #c9cdd4; border-radius: 4px; background: #fff; }
.list { flex: 1 0 auto; }
.bar { display: flex; align-items: center; height: 53px; padding: 0 20px 0 25px; }
.board-g .bar { height: 52px; padding-right: 25px; }
.range { display: flex; align-items: center; gap: 5px; white-space: nowrap; }
.range svg { width: 14px; height: 14px; color: #606266; }
.grid { display: flex; padding-left: 5px; }
.board-g .grid { padding-right: 5px; }
.data { flex: 1; width: 100%; min-width: 0; color: #606266; }
.data th { height: 39px; background: #f2f3f5; }
.data td { height: 39px; }
.data .tall td { height: 48px; }
.data tbody tr:nth-child(even) td { background: #fafafa; }
.data tbody tr.sel td { background: #d9ecff; }
.data.pin4 td:nth-child(4), .data.pin4 th:nth-child(4),
.data.pin3 td:nth-child(3), .data.pin3 th:nth-child(3) { position: relative; box-shadow: 5px 0 6px -3px rgba(0, 0, 0, .12); clip-path: inset(0 -10px 0 0); }
.data.pin3 td:nth-child(4) { padding-right: 33px; }
.cut { display: flex; justify-content: flex-end; overflow: hidden; margin-right: 15px; }
.rail { flex: none; width: 9px; }
.rail::before { content: ""; display: block; height: 39px; }
.rail.headed::before { background: #f2f3f5; }
.rail i { display: block; height: 410px; border-radius: 5px; background: #b8b8b8; }
.board-g .rail i { height: 401px; }

input[type="checkbox"] { appearance: none; display: block; width: 14px; height: 14px; margin: 0 auto; border: 1px solid #dcdfe6; border-radius: 2px; background: #fff; }
input[type="checkbox"].hot { border-color: #409eff; }
input[type="checkbox"].part { border-color: #409eff; background: linear-gradient(#fff, #fff) center / 6px 2px no-repeat #409eff; }
input[type="checkbox"]:checked { border-color: #409eff; background: url("data:image/svg+xml,%3Csvg xmlns='http://www.w3.org/2000/svg' viewBox='0 0 12 12'%3E%3Cpath fill='none' stroke='%23fff' stroke-width='1.400' d='M2.500 6 5 8.500 9.500 3.500'/%3E%3C/svg%3E") center / 12px no-repeat #409eff; }

/* smaller report with a dialog over it */
.compact { font-size: 12px; }
.compact .tabs { height: 35px; }
.compact .tabs a { padding: 0 18px; }
.compact .tabs a.on { gap: 8px; padding-right: 15px; }
.compact .tabs a:not(.on) { padding-right: 20px; }
.compact .tabs a:first-child { padding-right: 17px; }
.compact .search { height: 48px; padding: 0 22px 0 14px; margin-bottom: 17px; }
.compact .lead { width: 69px; }
.compact .search .box { width: 171px; height: 27px; padding: 0 13px; font-size: 11px; }
.compact .box + .box { margin-left: 17px; }
.compact .more { margin-left: 27px; gap: 5px; }
.compact .more svg { width: 10px; height: 10px; }
.compact .acts { gap: 17px; }
.compact .btn { height: 28px; min-width: 62px; padding: 0 11px; gap: 4px; font-size: 11px; }
.compact .btn svg { width: 11px; height: 11px; }
.compact .bar { height: 46px; padding: 0 21px 0 22px; }
.compact .range { gap: 4px; }
.compact .range svg { width: 12px; height: 12px; }
.compact .btn.first { margin-left: 26px; }
.compact .data th, .compact .data td { height: 33px; }
.compact .data tr:nth-child(even) td { height: 34px; }
.compact .data .tall:nth-child(even) td { height: 41px; }
.compact .cut { margin-right: 14px; }
.compact .rail { width: 7px; margin-right: 5px; }
.compact .rail::before { height: 33px; }
.compact .rail i { height: 351px; }
.compact input[type="checkbox"] { width: 12px; height: 12px; }
.mask { position: absolute; inset: 0; background: rgba(0, 0, 0, .5); }
.modal { position: absolute; left: 313px; top: 121px; width: 658px; height: 332px; padding: 0 17px; border-radius: 3px; background: #fff; color: #606266; font-size: 14px; box-shadow: 0 1px 3px rgba(0, 0, 0, .3); }
.modal header { display: flex; justify-content: space-between; align-items: center; height: 54px; }
.modal h2 { font-size: 15px; color: #303133; }
.icon { display: flex; padding: 0; border: 0; background: none; color: #909399; }
.icon svg { width: 12px; height: 12px; }
.who { display: flex; justify-content: space-between; line-height: 32px; margin-bottom: 5px; }
.visits { width: 100%; font-size: 12px; }
.visits th { height: 33px; background: #f2f3f5; }
.visits td { height: 52px; color: #909399; border-bottom: 1px solid #ebeef5; }
.modal > label { display: block; line-height: 47px; }
.counted { position: relative; }
.counted span { position: absolute; right: 9px; bottom: 5px; color: #909399; font-size: 11px; line-height: 12px; }
.modal .box { width: 100%; height: 47px; padding: 4px 13px; font-size: 12px; resize: vertical; }
.modal footer { display: flex; justify-content: flex-end; gap: 17px; margin-top: 17px; }

/* prototype dialogs */
.dialog { border: 1px solid #c9c9c9; border-radius: 4px; background: #fff; box-shadow: 0 0 4px rgba(0, 0, 0, .15); }
.dialog header { display: flex; align-items: center; justify-content: space-between; height: 42px; padding: 0 11px 0 15px; border-bottom: 1px solid #e4e4e4; color: #606266; }
.dialog footer { display: flex; justify-content: flex-end; gap: 8px; padding: 10px 15px 12px; border-top: 1px solid #e4e4e4; }
.dialog footer button, .import button { width: 65px; height: 30px; padding: 0; border: 1px solid #d0d0d0; border-radius: 4px; background: #fff; color: #606266; }
.dialog footer .go { border-color: #37a0ff; background: #37a0ff; color: #fff; }
.dialog textarea { width: 172px; height: 113px; border: 1px solid #c9c9c9; border-radius: 4px; background: #fff; }
.history { display: flex; justify-content: space-between; height: 199px; padding: 11px 5px 0 2px; }
.history table { align-self: flex-start; width: 378px; }
.history th { height: 30px; font-weight: 400; }
.history td { height: 27px; }
.history i { width: 6px; height: 170px; margin-top: 7px; border-radius: 3px; background: #d8d8d8; }
.fresh { padding: 10px 0 21px; border-top: 1px solid #e4e4e4; }
.fresh h3 { font-weight: 700; padding-left: 18px; margin-bottom: 8px; }
.fields { display: grid; grid-template-columns: 132px 172px; gap: 12px 21px; align-items: center; }
.fields > label { text-align: right; white-space: nowrap; }
.fields .toplabel { align-self: start; padding-top: 7px; }
.dialog .counted span { color: #d8d8d8; font-size: 14px; line-height: 18px; }
.split {
  appearance: none; width: 172px; height: 30px; padding: 0 40px 0 8px; border: 1px solid #d0d0d0; border-radius: 3px;
  background: url("data:image/svg+xml,%3Csvg xmlns='http://www.w3.org/2000/svg' width='34' height='30'%3E%3Cpath fill='none' stroke='%23c9c9c9' d='M0.500 0V30'/%3E%3Cpath fill='none' stroke='%23999' stroke-width='1.300' d='M9 11 17 20 25 11'/%3E%3C/svg%3E") right center no-repeat #fff;
}
.dialog-d header { height: 43px; padding-right: 16px; }
.dialog-d .fields { grid-template-columns: 66px 172px; gap: 17px 14px; padding: 33px 0 38px 82px; }
.dialog-d .fields > label { text-align: left; }
.dialog-d footer { padding: 12px 15px 16px; }
.small, .radios { font-size: 13px; }
.radios { display: flex; gap: 19px; white-space: nowrap; }
.radios label, .import label { display: flex; align-items: center; gap: 2px; }
input[type="radio"] { width: 13px; height: 13px; accent-color: #666; }

.options { list-style: none; border: 1px solid #f0f0f0; font-size: 13px; color: #1f2329; padding-bottom: 2px; }
.options li { display: flex; align-items: center; justify-content: space-between; height: 32px; padding: 0 4px 0 5px; }
.options .on { height: 29px; background: #ebecee; }
.options svg { width: 14px; height: 14px; }

.import { border: 1px dashed #ccc; padding: 24px 0 0 31px; font-size: 13px; }
.import div { display: flex; align-items: center; height: 20px; }
.import div + div { height: 30px; margin-top: 19px; }
.import span { width: 66px; }
.import label + label { margin-left: 13px; }
.import button { font-size: 14px; }
.import a { margin-left: 13px; color: #169bd5; text-decoration: underline; }

.sheet th, .sheet td { height: 30px; border: 1px solid #777; font-size: 13px; font-weight: 400; }

.confirm { display: flex; flex-direction: column; align-items: center; padding: 34px 0 0 14px; border-radius: 4px; background: #fff; box-shadow: 0 4px 14px rgba(0, 0, 0, .4); }
.confirm .shut { position: absolute; right: 10px; top: 8px; padding: 0; border: 0; background: none; font-size: 15px; }
.confirm h2 { font-size: 15px; }
.confirm p { margin: 26px 0 35px; padding-left: 8px; font-size: 16px; line-height: 25px; color: #888; text-align: center; }
.confirm footer { display: flex; gap: 21px; padding-left: 8px; }
.confirm footer button { width: 108px; height: 32px; padding: 0; border: 1px solid #777; border-radius: 4px; background: #fff; }
.confirm footer .go { border-color: #1890ff; background: #1890ff; color: #fff; }

/* advanced filter */
.advanced { border: 1px solid #ccc; background: #fff; color: #606266; }
.advanced header { display: flex; align-items: flex-start; justify-content: space-between; padding: 18px 21px 27px 18px; }
.advanced header .icon { margin-top: 4px; }
.advanced h2 { font-size: 18px; line-height: 25px; color: #303133; }
.filters { display: grid; grid-template-columns: repeat(4, 1fr); gap: 13px 20px; padding: 0 29px 0 28px; }
.filters label, .item { display: flex; flex-direction: column; gap: 4px; }
.two { grid-column: span 2; }
.newline { grid-column: 1 / span 2; }
.filters select {
  appearance: none; height: 32px; padding: 0 30px 0 14px; border: 1px solid #dcdfe6; border-radius: 4px; color: #c0c4cc; font-size: 13px;
  background: url("data:image/svg+xml,%3Csvg xmlns='http://www.w3.org/2000/svg' width='12' height='12'%3E%3Cpath fill='none' stroke='%23c0c4cc' stroke-width='1.200' d='M1.500 3.500 6 8.500 10.500 3.500'/%3E%3C/svg%3E") right 11px center no-repeat #fff;
}
.joined { display: flex; align-items: center; height: 32px; border: 1px solid #dcdfe6; border-radius: 4px; }
.joined.hover { border-color: #c0c4cc; }
.region select { flex: 1; min-width: 0; height: 28px; padding: 0 30px 0 40px; border: 0; }
.dates { padding-left: 11px; color: #c0c4cc; font-size: 13px; }
.dates svg { width: 14px; height: 14px; }
.dates input { width: 172px; padding: 0; border: 0; background: none; text-align: center; }
.dates b { width: 22px; text-align: center; font-weight: 400; color: #303133; }
.advanced footer { display: flex; align-items: flex-start; padding: 14px 19px 16px 30px; line-height: 28px; }
.advanced footer label { margin: 0 12px 0 47px; }
.advanced footer .acts { margin-top: 21px; }

/* notes */
.note { color: #f00; white-space: nowrap; }
.n1 { left: 2056px; top: 153px; }
.n2 { left: 2056px; top: 184px; }
.n3 { left: 1989px; top: 815px; }
.n4 { left: 1989px; top: 854px; }
.n5 { left: 1989px; top: 890px; }
.n6 { left: 1989px; top: 1026px; }
.n7 { left: 1989px; top: 1061px; }
.n8 { left: 1989px; top: 1094px; }
.n9 { left: 1989px; top: 1190px; line-height: 30px; }
.n10 { left: 2474px; top: 1076px; }
.n11 { left: 2479px; top: 1203px; }
.n12 { left: 2633px; top: 1268px; }
.n13 { left: 2633px; top: 1302px; }
.n14 { left: 1972px; top: 1763px; }
.n15 { left: 1972px; top: 1809px; }
```
